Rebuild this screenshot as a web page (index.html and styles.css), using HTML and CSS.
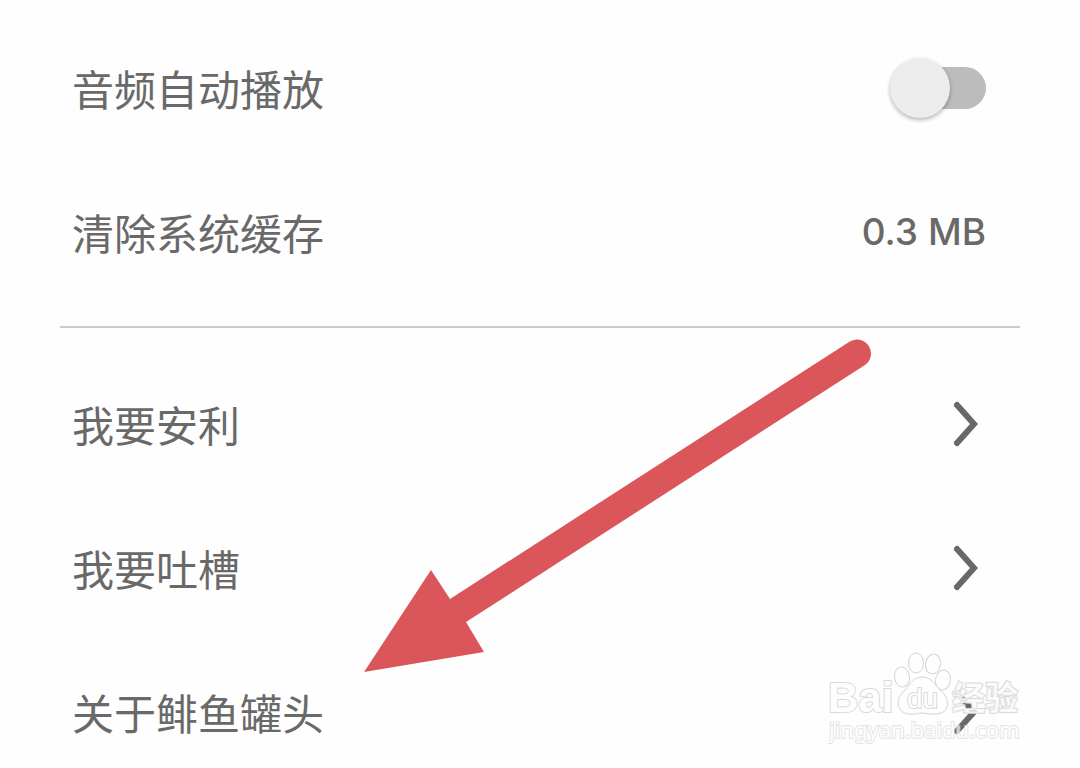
FILE: index.html
```html
<!doctype html>
<html lang="zh-CN">
  <head>
    <meta charset="UTF-8" />
    <meta name="viewport" content="width=device-width" />
    <title>设置</title>

    <link rel="stylesheet" href="styles.css">
  </head>

  <body>
    <main class="settings">
      <ul class="settings-list">
        <li class="row">
          <label for="autoplay">音频自动播放</label>
          <input class="switch" type="checkbox" role="switch" id="autoplay" />
        </li>
        <li>
          <button class="row" type="button">
            <span>清除系统缓存</span>
            <span class="row-value">0.3 MB</span>
          </button>
        </li>
      </ul>

      <hr class="divider" />

      <ul class="settings-list">
        <li>
          <a class="row" href="#recommend">
            我要安利
            <svg class="chevron" viewBox="0 0 28 48" aria-hidden="true">
              <path d="M5 5 L22 24 L5 43" />
            </svg>
          </a>
        </li>
        <li>
          <a class="row" href="#feedback">
            我要吐槽
            <svg class="chevron" viewBox="0 0 28 48" aria-hidden="true">
              <path d="M5 5 L22 24 L5 43" />
            </svg>
          </a>
        </li>
        <li>
          <a class="row" href="#about">
            关于鲱鱼罐头
            <svg class="chevron" viewBox="0 0 28 48" aria-hidden="true">
              <path d="M5 5 L22 24 L5 43" />
            </svg>
          </a>
        </li>
      </ul>
    </main>

    <svg class="pointer" viewBox="0 0 508 334" aria-hidden="true">
      <path d="M0 333 L67 231 L86 260 L485 3 A14 14 0 0 1 501 26 L102 283 L120 313 Z" />
    </svg>

    <svg class="watermark" viewBox="0 0 200 100">
      <text class="watermark-url" x="1" y="88">jingyan.baidu.com</text>
      <text class="watermark-brand" x="0" y="62">Bai</text>
      <g class="watermark-paw">
        <ellipse cx="74" cy="27" rx="7.5" ry="10" transform="rotate(-8 74 27)" />
        <ellipse cx="88" cy="13" rx="7.5" ry="10" />
        <ellipse cx="105" cy="14" rx="7.5" ry="10" transform="rotate(10 105 14)" />
        <ellipse cx="115" cy="30" rx="7.5" ry="10" transform="rotate(12 115 30)" />
        <path d="M94 27 C105 27 108 37 114 42 C123 50 121 63 109 64 C103 65 99 63 94 63 C90 63 87 65 81 64 C69 63 67 50 75 42 C81 37 84 27 94 27 Z" />
      </g>
      <text class="watermark-du" x="79" y="58">du</text>
      <text class="watermark-cn" x="124" y="60">经验</text>
    </svg>
  </body>
</html>
```

FILE: styles.css
```css
* {
  box-sizing: border-box;
}

:root {
  --text-color: #696969;
  --line-color: #cbcbcb;
  --arrow-color: #db565b;
}

body {
  position: relative;
  margin: 0;
  background-color: #fefefe;
  color: var(--text-color);
  font-family: "Noto Sans CJK SC", sans-serif;
  font-size: 42px;
  line-height: 64px;
}

.settings {
  padding: 40px 60px 8px;
}

.settings-list {
  display: grid;
  gap: 48px;
  margin: 0;
  padding: 0 34px 0 12px;
  list-style: none;
}

.row {
  display: flex;
  align-items: center;
  justify-content: space-between;
  width: 100%;
  min-height: 96px;
  padding: 0;
  border: 0;
  background: none;
  color: inherit;
  font: inherit;
  text-decoration: none;
  cursor: pointer;
}

.row-value {
  font-family: Inter, sans-serif;
  font-size: 37px;
  font-weight: 500;
}

.divider {
  height: 2px;
  margin: 46px 0 48px;
  border: 0;
  background-color: var(--line-color);
}

.switch {
  display: flex;
  align-items: center;
  appearance: none;
  width: 84px;
  height: 42px;
  margin: 0;
  border-radius: 21px;
  background-color: #bcbcbc;
  cursor: pointer;
}

.switch::before {
  content: "";
  flex: none;
  width: 60px;
  height: 60px;
  margin-left: -12px;
  border-radius: 50%;
  background-color: #ececec;
  box-shadow: 0 2px 4px rgb(0 0 0 / 0.3);
}

.switch:checked {
  justify-content: flex-end;
}

.chevron {
  width: 28px;
  height: 48px;
  margin-right: 6px;
  fill: none;
  stroke: var(--text-color);
  stroke-width: 6;
  stroke-linecap: round;
}

.pointer {
  position: absolute;
  top: 339px;
  left: 364px;
  width: 508px;
  fill: var(--arrow-color);
  pointer-events: none;
}

.watermark {
  position: absolute;
  top: 650px;
  left: 828px;
  width: 200px;
  fill: #fefefe;
  stroke: #dadada;
  stroke-width: 2;
  paint-order: stroke;
  pointer-events: none;
}

.watermark-brand {
  font: 700 42px "Liberation Sans", sans-serif;
}

.watermark-paw {
  stroke: #d4d4d4;
  stroke-width: 1;
  paint-order: normal;
}

.watermark-du {
  font: 400 28px "Liberation Sans", sans-serif;
}

.watermark-cn {
  font: 700 33px "Noto Sans CJK SC", sans-serif;
  fill-opacity: 0.8;
}

.watermark-url {
  font: 400 22px "Noto Sans", sans-serif;
  opacity: 0.7;
}
```
